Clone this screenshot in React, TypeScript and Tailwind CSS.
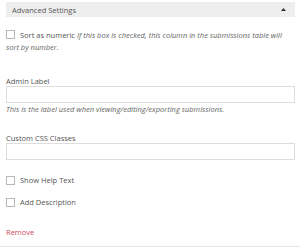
import React from "react";

function Box() {
  return <span className="inline-block w-[9px] h-[9px] border border-[#b4b9be] bg-white shrink-0" />;
}

export default function App() {
  return (
    <div className="w-[300px] h-[249px] bg-white overflow-hidden text-[7.5px] text-[#555] flex flex-col" style={{ fontFamily: '"Open Sans", sans-serif' }}>
      <div className="mt-[2px] ml-[6px] w-[289px] h-[15px] bg-[#eeeeee] flex items-center justify-between pl-[6px] pr-[9px]">
        <span className="text-[#555] leading-[12px]">Advanced Settings</span>
        <svg width="5" height="3" viewBox="0 0 5 3"><polygon points="2.5,0 5,3 0,3" fill="#333" /></svg>
      </div>
      <div className="px-[6px] flex flex-col">
        <div className="mt-[12px] leading-[12px] pr-[8px]">
          <span className="inline-block w-[9px] h-[9px] border border-[#b4b9be] bg-white align-[-1px] mr-[5px]" />
          <span className="text-[#555] mr-[2px]">Sort as numeric</span>
          <span className="italic text-[#666]">If this box is checked, this column in the submissions table will sort by number.</span>
        </div>
        <div className="mt-[23px] leading-[10px] text-[#555]">Admin Label</div>
        <div className="w-[289px] h-[17px] border border-[#dddddd] bg-white" />
        <div className="italic text-[#666] leading-[12px]">This is the label used when viewing/editing/exporting submissions.</div>
        <div className="mt-[18px] leading-[10px] text-[#555]">Custom CSS Classes</div>
        <div className="w-[289px] h-[17px] border border-[#dddddd] bg-white" />
        <div className="mt-[14px] h-[12px] flex items-center gap-[5px]">
          <Box />
          <span className="leading-[12px]">Show Help Text</span>
        </div>
        <div className="mt-[10px] h-[12px] flex items-center gap-[5px]">
          <Box />
          <span className="leading-[12px]">Add Description</span>
        </div>
        <div className="mt-[18px] leading-[12px] text-[#c9485b]">Remove</div>
      </div>
      <div className="mt-[8px] h-[1px] w-full bg-[#e5e5e5]" />
    </div>
  );
}
